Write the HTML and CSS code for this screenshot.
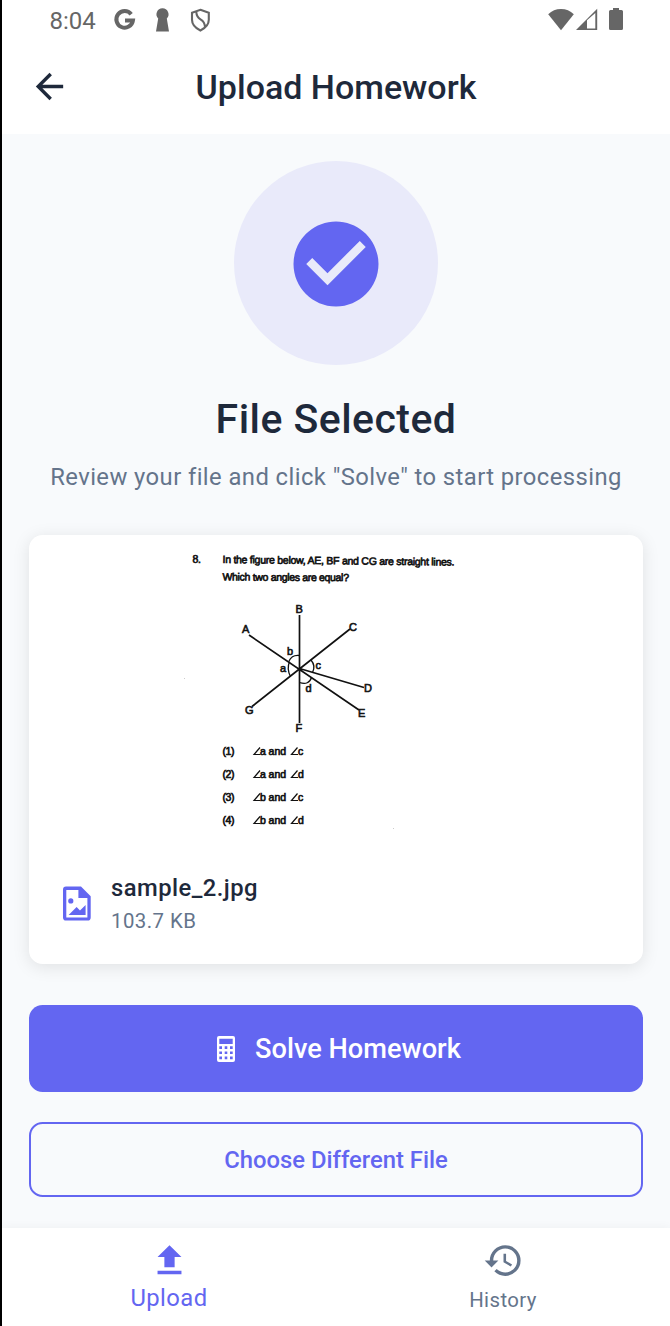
FILE: index.html
```html
<!DOCTYPE html>
<html lang="en">
<head>
<meta charset="utf-8">
<title>Upload Homework</title>
<link rel="stylesheet" href="styles.css">
</head>
<body>
<div class="screen">
  <div class="status">
    <span class="clock">8:04</span>
    <svg class="status-left" width="100" height="40" viewBox="112 0 100 40">
      <path d="M131.200 14.200A8.300 8.300 0 1 0 132.900 20.600H125" fill="none" stroke="#666" stroke-width="4"/>
      <path d="M162.400 8.300a6 6 0 0 1 4.400 10.200l2.200 13.100h-13l2.200-13.100a6 6 0 0 1 4.200-10.200z" fill="#666"/>
      <path d="M200.400 9.800l8.400 2.900v7.100c0 4.600-3.200 8.200-8.400 10.700c-5.200-2.500-8.400-6.100-8.400-10.700v-7.100zM196.300 12c.2 4 1.200 5.600 4.200 7.300s4.400 3.500 4.500 8" fill="none" stroke="#666" stroke-width="2.100"/>
    </svg>
    <svg class="status-right" width="78" height="40" viewBox="547 0 78 40">
      <path d="M561 30.200L548.200 14.200Q553.500 9 561 9t12.800 5.200z" fill="#666"/>
      <path d="M576 30L597.200 8.800V30zM587 20.200V28.500H595.300V12.900z" fill="#666" fill-rule="evenodd"/>
      <path d="M613 8h6v2h2.500q1.500 0 1.500 1.500v17q0 1.500-1.500 1.500h-11q-1.500 0-1.500-1.500v-17q0-1.500 1.500-1.500H613z" fill="#666"/>
    </svg>
  </div>
  <header class="appbar">
    <svg class="back" width="41" height="41" viewBox="0 0 24 24"><path d="M20 11H7.830l5.590-5.590L12 4l-8 8 8 8 1.410-1.410L7.830 13H20z" fill="#1e293b"/></svg>
    <h1 class="title">Upload Homework</h1>
  </header>
  <main class="content">
    <div class="badge">
      <svg width="102" height="102" viewBox="0 0 24 24"><path d="M12 2C6.480 2 2 6.480 2 12s4.480 10 10 10 10-4.480 10-10S17.520 2 12 2zm-2 15l-5-5 1.410-1.410L10 14.170l7.590-7.590L19 8l-9 9z" fill="#6366f1"/></svg>
    </div>
    <h2 class="heading">File Selected</h2>
    <p class="subtitle">Review your file and click "Solve" to start processing</p>
    <section class="card">
      <svg class="preview" width="614" height="320" viewBox="29 535 614 320">
        <g class="question">
          <text x="192.500" y="562.500" textLength="8.500">8.</text>
          <text x="222.500" y="563" textLength="232" transform="rotate(.65 222 563)">In the figure below, AE, BF and CG are straight lines.</text>
          <text x="222.500" y="580.500" textLength="126.500" transform="rotate(.3 222 580)">Which two angles are equal?</text>
        </g>
        <g class="lines">
          <path d="M299.500 615V723M249 635L359 710M350 629L252 706.500M299.500 668.500L364 687.500"/>
          <path d="M289 661Q292 654.500 299.500 655.500M289.500 661.500Q286.500 669 290.500 676.500M311 660Q316 666 312.500 672.500M299.500 682.500Q309 685.500 311.500 677.500" stroke-width="1.300"/>
        </g>
        <g class="labels">
          <text x="295.500" y="613">B</text><text x="242" y="633">A</text><text x="349" y="630.500">C</text>
          <text x="364" y="691.500">D</text><text x="358" y="717">E</text><text x="295.500" y="732">F</text><text x="245" y="713.500">G</text>
          <text x="287" y="655">b</text><text x="280" y="672">a</text><text x="315.500" y="669">c</text><text x="305.500" y="692">d</text>
        </g>
        <g class="question">
          <text x="222.500" y="755" textLength="12">(1)</text><text x="260" y="755" textLength="26">a and</text><text x="298" y="755">c</text>
          <text x="222.500" y="778" textLength="12">(2)</text><text x="260" y="778" textLength="26">a and</text><text x="298" y="778">d</text>
          <text x="222.500" y="801" textLength="12">(3)</text><text x="260" y="801" textLength="26">b and</text><text x="298" y="801">c</text>
          <text x="222.500" y="824" textLength="12">(4)</text><text x="260" y="824" textLength="26">b and</text><text x="298" y="824">d</text>
        </g>
        <path class="angles" d="M260 747.500L254 754.500H260.500M297.500 747.500L291.500 754.500H298M260 770.500L254 777.500H260.500M297.500 770.500L291.500 777.500H298M260 793.500L254 800.500H260.500M297.500 793.500L291.500 800.500H298M260 816.500L254 823.500H260.500M297.500 816.500L291.500 823.500H298"/>
        <path d="M184 678h1v1h-1zM393 828h1v1h-1z" fill="#ccc"/>
      </svg>
      <div class="file">
        <svg width="28" height="35" viewBox="63 886 28 35">
          <path d="M66 886.500H81L90.700 896.200V917.500Q90.700 920.600 87.700 920.600H66Q63 920.600 63 917.500V889.500Q63 886.500 66 886.500zM66.300 890V917.400H87.400V898H78.400V890z" fill="#6366f1" fill-rule="evenodd"/>
          <circle cx="70.800" cy="900.900" r="2.600" fill="#6366f1"/>
          <path d="M68.600 915L76.600 907L80 910.400L85.600 905V915z" fill="#6366f1"/>
        </svg>
        <div class="file-text">
          <span class="file-name">sample_2.jpg</span>
          <span class="file-size">103.7 KB</span>
        </div>
      </div>
    </section>
    <button class="btn primary">
      <svg width="18" height="26" viewBox="0 0 18 26"><path d="M2 0H16Q18 0 18 2V24Q18 26 16 26H2Q0 26 0 24V2Q0 0 2 0zM2.300 2.700V8H15.700V2.700zM2.300 10.300V13H5V10.300zM7.700 10.300V13H10.300V10.300zM13 10.300V13H15.700V10.300zM2.300 15.400V18H5V15.400zM7.700 15.400V18H10.300V15.400zM13 15.400V18H15.700V15.400zM2.300 20.500V23.200H5V20.500zM7.700 20.500V23.200H10.300V20.500zM13 20.500V23.200H15.700V20.500z" fill="#fff" fill-rule="evenodd"/></svg>
      <span>Solve Homework</span>
    </button>
    <button class="btn outline">Choose Different File</button>
  </main>
  <nav class="tabs">
    <a class="tab active">
      <svg width="41" height="41" viewBox="0 0 24 24"><path d="M5 20h14v-2H5zM5 10h4v6h6v-6h4l-7-7z" fill="#6366f1"/></svg>
      <span>Upload</span>
    </a>
    <a class="tab">
      <svg width="41" height="41" viewBox="0 0 24 24"><path d="M13 3a9 9 0 0 0-9 9H1l3.890 3.890.07.14L9 12H6c0-3.870 3.130-7 7-7s7 3.130 7 7-3.130 7-7 7c-1.930 0-3.680-.79-4.940-2.060l-1.420 1.420A8.954 8.954 0 0 0 13 21a9 9 0 0 0 0-18zm-1 5v5l4.280 2.540.72-1.210-3.500-2.080V8z" fill="#64748b"/></svg>
      <span>History</span>
    </a>
  </nav>
</div>
</body>
</html>
```
FILE: styles.css
```css
* { box-sizing: border-box; }
body { margin: 0; font-family: Roboto, sans-serif; color: #1e293b; }
h1, h2, p { margin: 0; font-weight: 500; white-space: nowrap; }
svg { display: block; flex: none; }
.screen {
  width: 670px; height: 1326px; display: flex; flex-direction: column;
  border-left: 2px solid #000; background: #f8fafc; overflow: hidden;
}
.status { height: 40px; flex: none; display: flex; background: #fff; padding-left: 47.500px; }
.clock { width: 62.500px; font-size: 24px; line-height: 42px; color: #666; }
.status-right { margin-left: auto; margin-right: 45px; }
.appbar {
  height: 94px; flex: none; display: grid; grid-template-columns: 100px 1fr 100px;
  align-items: center; background: #fff; padding-bottom: 2px;
}
.back { margin-left: 27px; }
.title { font-size: 34px; line-height: 40px; text-align: center; margin-top: 2px; }
.content {
  flex: 1; display: flex; flex-direction: column; align-items: center;
  padding: 27px 27px 0;
}
.badge {
  width: 204px; height: 204px; flex: none; border-radius: 50%; background: #e9eafa;
  display: flex; align-items: center; justify-content: center; padding-top: 2px;
}
.heading { font-size: 41px; line-height: 54px; margin-top: 27px; letter-spacing: .45px; }
.subtitle { font-size: 23.800px; line-height: 34px; margin-top: 14px; font-weight: 400; color: #64748b; letter-spacing: .43px; }
.card {
  width: 614px; height: 429px; flex: none; margin-top: 41px; border-radius: 13.600px;
  background: #fff; box-shadow: 0 3px 17px rgba(0, 0, 0, .1);
}
.question { font: 10.500px "Liberation Sans", Arial, sans-serif; fill: #111; stroke: #111; stroke-width: .65px; }
.labels { font: 11px "Liberation Sans", Arial, sans-serif; fill: #111; stroke: #111; stroke-width: .6px; }
.lines, .angles { fill: none; stroke: #111; stroke-width: 1.700px; }
.angles { stroke-width: 1.200px; }
.file { display: flex; align-items: flex-start; gap: 20px; padding: 16px 34px 0; }
.file svg { margin-top: 15px; }
.file-text { display: flex; flex-direction: column; }
.file-name { font-size: 23.800px; line-height: 34px; font-weight: 500; letter-spacing: .45px; }
.file-size { font-size: 20.400px; line-height: 32px; color: #64748b; letter-spacing: .45px; }
.btn {
  width: 614px; flex: none; border: 0; border-radius: 13.600px; padding: 0;
  font-family: inherit; font-weight: 500; display: flex; align-items: center; justify-content: center;
}
.primary { height: 87px; margin-top: 41px; gap: 20px; padding-left: 6px; background: #6366f1; color: #fff; font-size: 27.200px; }
.outline { height: 75px; margin-top: 30px; border: 2px solid #6366f1; background: transparent; color: #6366f1; font-size: 23.800px; }
.tabs {
  height: 98px; flex: none; display: grid; grid-template-columns: 1fr 1fr;
  background: #fff; box-shadow: 0 -1px 9px rgba(0, 0, 0, .04);
}
.tab { display: flex; flex-direction: column; align-items: center; padding-top: 12px; color: #64748b; font-size: 20.400px; line-height: 30px; letter-spacing: .4px; }
.tab span { padding-top: 4px; }
.active { color: #6366f1; font-size: 23.800px; }
.active span { padding-top: 2px; }
```
